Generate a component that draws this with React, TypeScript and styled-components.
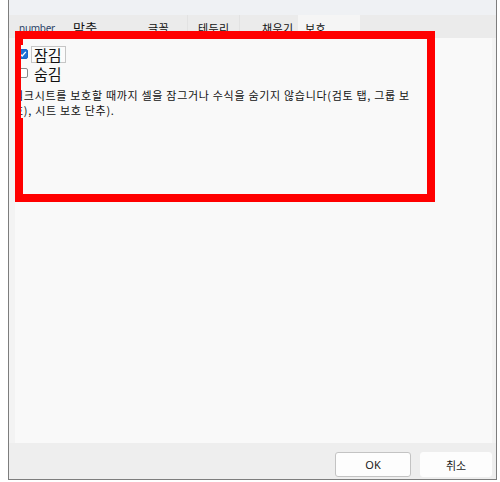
import React from 'react';
import styled, { createGlobalStyle } from 'styled-components';

const GlobalStyle = createGlobalStyle`
  html, body {
    margin: 0;
    padding: 0;
    background: #ffffff;
  }
  body {
    font-family: "Noto Sans CJK KR", "Noto Sans", sans-serif;
  }
`;

const Dialog = styled.div`
  position: relative;
  margin-left: 8px;
  width: 489px;
  height: 480px;
  box-sizing: border-box;
  border: 1px solid #7d7d7d;
  border-top: none;
  display: flex;
  flex-direction: column;
  background: #f3f3f3;
`;

const Header = styled.div`
  height: 15px;
  background: #eff1f4;
`;

const TabStrip = styled.div`
  height: 23px;
  display: flex;
  background: #ebebeb;
`;

const Tab = styled.div<{ $width: number; $pad: number; $active?: boolean; $sep?: boolean; $latin?: boolean; $big?: boolean }>`
  width: ${({ $width }) => $width}px;
  padding-left: ${({ $pad }) => $pad}px;
  box-sizing: border-box;
  display: flex;
  align-items: center;
  padding-top: 2px;
  background: ${({ $active }) => ($active ? '#f5f5f5' : 'transparent')};
  border-right: 1px solid ${({ $sep }) => ($sep ? '#e2e2e2' : 'transparent')};
  font-family: ${({ $latin }) => ($latin ? '"Noto Sans", sans-serif' : '"Noto Sans CJK KR", sans-serif')};
  font-size: ${({ $latin, $big }) => ($latin ? 10 : $big ? 13 : 11)}px;
  letter-spacing: ${({ $latin }) => ($latin ? '-0.3px' : '0.4px')};
  color: ${({ $latin }) => ($latin ? '#2c4468' : '#111111')};
`;

const Body = styled.div`
  flex: 1;
  display: flex;
  padding: 0 4px 0 6px;
`;

const Panel = styled.div`
  flex: 1;
  background: #f9f9f9;
  padding: 7px 0 0 6px;
`;

const RedFrame = styled.div`
  position: absolute;
  left: 6px;
  top: 31px;
  width: 420px;
  height: 171px;
  box-sizing: border-box;
  border: 8px solid #ff0000;
  pointer-events: none;
`;

const Clip = styled.div`
  position: relative;
  z-index: 1;
  width: 400px;
  overflow: hidden;
  background: #f9f9f9;
`;

const Row = styled.div`
  height: 18px;
  margin-left: -3px;
  display: flex;
  align-items: center;
  gap: 3px;
  margin-bottom: 1px;
`;

const Box = styled.span<{ $checked?: boolean }>`
  width: 10px;
  height: 10px;
  box-sizing: border-box;
  border-radius: 2px;
  border: 1px solid ${({ $checked }) => ($checked ? '#1b64c8' : '#8a8a8a')};
  background: ${({ $checked }) => ($checked ? '#1b6fd6' : '#ffffff')};
  display: flex;
  align-items: center;
  justify-content: center;
`;

const Label = styled.span<{ $focus?: boolean }>`
  height: 17px;
  box-sizing: border-box;
  padding: 0 3px 0 2px;
  display: flex;
  align-items: center;
  font-size: 15px;
  color: #111111;
  border: 1px solid ${({ $focus }) => ($focus ? '#c6c6c6' : 'transparent')};
  background: ${({ $focus }) => ($focus ? '#fbfbfb' : 'transparent')};
`;

const Note = styled.div`
  margin-top: 6px;
  margin-left: -8px;
  font-size: 11px;
  letter-spacing: 0.7px;
  line-height: 15px;
  white-space: nowrap;
  color: #111111;
`;

const Footer = styled.div`
  height: 36px;
  background: #eeeeee;
  display: flex;
  justify-content: flex-end;
  align-items: flex-start;
  gap: 9px;
  padding: 9px 4px 0 0;
  box-sizing: border-box;
`;

const Button = styled.button<{ $width: number; $outlined?: boolean }>`
  width: ${({ $width }) => $width}px;
  height: 25px;
  border-radius: 3px;
  border: 1px solid ${({ $outlined }) => ($outlined ? '#c3c3c3' : '#fdfdfd')};
  background: #fdfdfd;
  font-family: "Noto Sans", "Noto Sans CJK KR", sans-serif;
  font-size: 11px;
  color: #1a1a1a;
  padding: 0;
`;

const tabs = [
  { label: 'number', width: 56, pad: 10, latin: true },
  { label: '맞춤', width: 60, pad: 8, big: true },
  { label: '글꼴', width: 63, pad: 23, sep: true },
  { label: '테두리', width: 52, pad: 10, sep: true },
  { label: '채우기', width: 58, pad: 22 },
  { label: '보호', width: 62, pad: 7, active: true },
];

function Check() {
  return (
    <svg width="8" height="8" viewBox="0 0 8 8">
      <path d="M1.3 4.2 L3.2 6 L6.8 1.8" fill="none" stroke="#ffffff" strokeWidth="1.3" />
    </svg>
  );
}

export default function App() {
  return (
    <>
      <GlobalStyle />
      <Dialog>
        <Header />
        <TabStrip>
          {tabs.map((t) => (
            <Tab
              key={t.label}
              $width={t.width}
              $pad={t.pad}
              $active={t.active}
              $sep={t.sep}
              $latin={t.latin}
              $big={t.big}
            >
              {t.label}
            </Tab>
          ))}
        </TabStrip>
        <Body>
          <Panel>
            <Clip>
              <Row>
                <Box $checked>
                  <Check />
                </Box>
                <Label $focus>잠김</Label>
              </Row>
              <Row>
                <Box />
                <Label>숨김</Label>
              </Row>
              <Note>
                워크시트를 보호할 때까지 셀을 잠그거나 수식을 숨기지 않습니다(검토 탭, 그룹 보
                <br />
                호), 시트 보호 단추).
              </Note>
            </Clip>
          </Panel>
        </Body>
        <Footer>
          <Button $width={76} $outlined>
            OK
          </Button>
          <Button $width={72}>취소</Button>
        </Footer>
        <RedFrame />
      </Dialog>
    </>
  );
}
